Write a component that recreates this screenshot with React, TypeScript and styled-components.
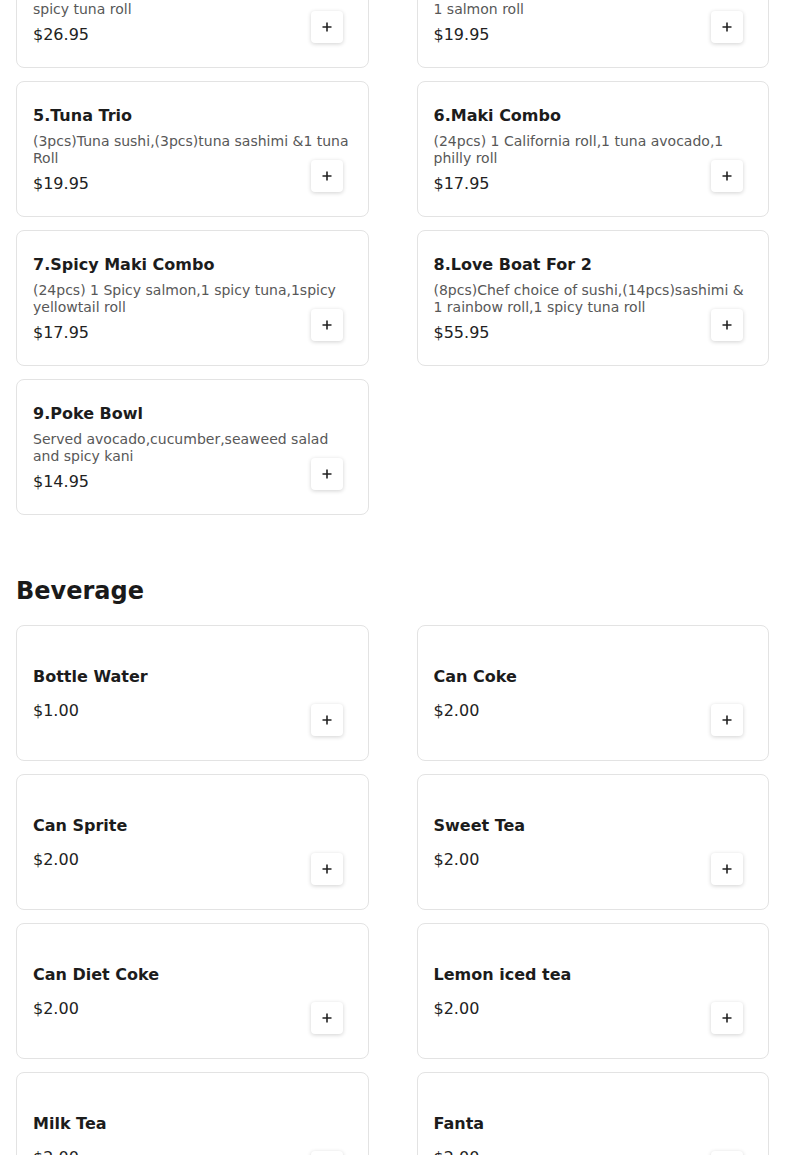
import React from "react";
import styled, { createGlobalStyle } from "styled-components";

const GlobalStyle = createGlobalStyle`
  html, body { margin: 0; padding: 0; background: #ffffff; }
  body { font-family: "DejaVu Sans", "Liberation Sans", sans-serif; color: #1a1a1a; overflow: hidden; }
`;

type Item = { name: string; desc?: string; price: string };

const sushi: Item[] = [
  { name: "3.Sushi Sashimi Combo", desc: "(9pcs)sashimi,(5pcs)sushi,1 crunch roll,1 spicy tuna roll", price: "$26.95" },
  { name: "4.Salmon Lover", desc: "(5pcs)Salmon sushi,(6pcs)salmon sashimi & 1\u00a0salmon roll", price: "$19.95" },
  { name: "5.Tuna Trio", desc: "(3pcs)Tuna sushi,(3pcs)tuna sashimi &1 tuna Roll", price: "$19.95" },
  { name: "6.Maki Combo", desc: "(24pcs) 1 California roll,1 tuna avocado,1 philly roll", price: "$17.95" },
  { name: "7.Spicy Maki Combo", desc: "(24pcs) 1 Spicy salmon,1 spicy tuna,1spicy yellowtail roll", price: "$17.95" },
  { name: "8.Love Boat For 2", desc: "(8pcs)Chef choice of sushi,(14pcs)sashimi & 1 rainbow roll,1 spicy tuna roll", price: "$55.95" },
  { name: "9.Poke Bowl", desc: "Served avocado,cucumber,seaweed salad and spicy kani", price: "$14.95" },
];

const beverages: Item[] = [
  { name: "Bottle Water", price: "$1.00" },
  { name: "Can Coke", price: "$2.00" },
  { name: "Can Sprite", price: "$2.00" },
  { name: "Sweet Tea", price: "$2.00" },
  { name: "Can Diet Coke", price: "$2.00" },
  { name: "Lemon iced tea", price: "$2.00" },
  { name: "Milk Tea", price: "$2.00" },
  { name: "Fanta", price: "$2.00" },
];

const Page = styled.main`
  padding: 0 16px;
  margin-top: -68px;
`;

const Section = styled.section`
  & + & { margin-top: 62px; }
`;

const Heading = styled.h2`
  margin: 0 0 20px;
  font-size: 24px;
  line-height: 28px;
  font-weight: 700;
  color: #1a1a1a;
`;

const Grid = styled.div`
  display: grid;
  grid-template-columns: 1fr 1fr;
  column-gap: 48px;
  row-gap: 13px;
`;

const Card = styled.div`
  position: relative;
  box-sizing: border-box;
  height: 136px;
  border: 1px solid #e3e3e3;
  border-radius: 8px;
  background: #fff;
  padding: 0 16px;
  display: flex;
  flex-direction: column;
  justify-content: center;
`;

const Title = styled.div`
  font-size: 16px;
  line-height: 19px;
  font-weight: 700;
  color: #1c1c1c;
  margin-bottom: 8px;
`;

const Desc = styled.div`
  font-size: 14px;
  line-height: 17px;
  color: #585858;
  margin-bottom: 7px;
`;

const Price = styled.div`
  font-size: 16px;
  line-height: 19px;
  color: #222222;
`;

const AddButton = styled.button`
  position: absolute;
  right: 25px;
  bottom: 24px;
  width: 32px;
  height: 32px;
  padding: 0;
  border: none;
  border-radius: 4px;
  background: #ffffff;
  box-shadow: 0 1px 4px rgba(0, 0, 0, 0.18);
  display: flex;
  align-items: center;
  justify-content: center;
  cursor: pointer;
`;

const Plus = () => (
  <svg width="10" height="10" viewBox="0 0 10 10">
    <path d="M5 0.5v9M0.5 5h9" stroke="#222" strokeWidth="1.6" />
  </svg>
);

const MenuCard = ({ item }: { item: Item }) => (
  <Card>
    <Title>{item.name}</Title>
    {item.desc ? <Desc>{item.desc}</Desc> : <Desc />}
    <Price>{item.price}</Price>
    <AddButton aria-label={`Add ${item.name}`}>
      <Plus />
    </AddButton>
  </Card>
);

export default function App() {
  return (
    <>
      <GlobalStyle />
      <Page>
        <Section>
          <Grid>
            {sushi.map((it) => (
              <MenuCard key={it.name} item={it} />
            ))}
          </Grid>
        </Section>
        <Section>
          <Heading>Beverage</Heading>
          <Grid>
            {beverages.map((it) => (
              <MenuCard key={it.name} item={it} />
            ))}
          </Grid>
        </Section>
      </Page>
    </>
  );
}
